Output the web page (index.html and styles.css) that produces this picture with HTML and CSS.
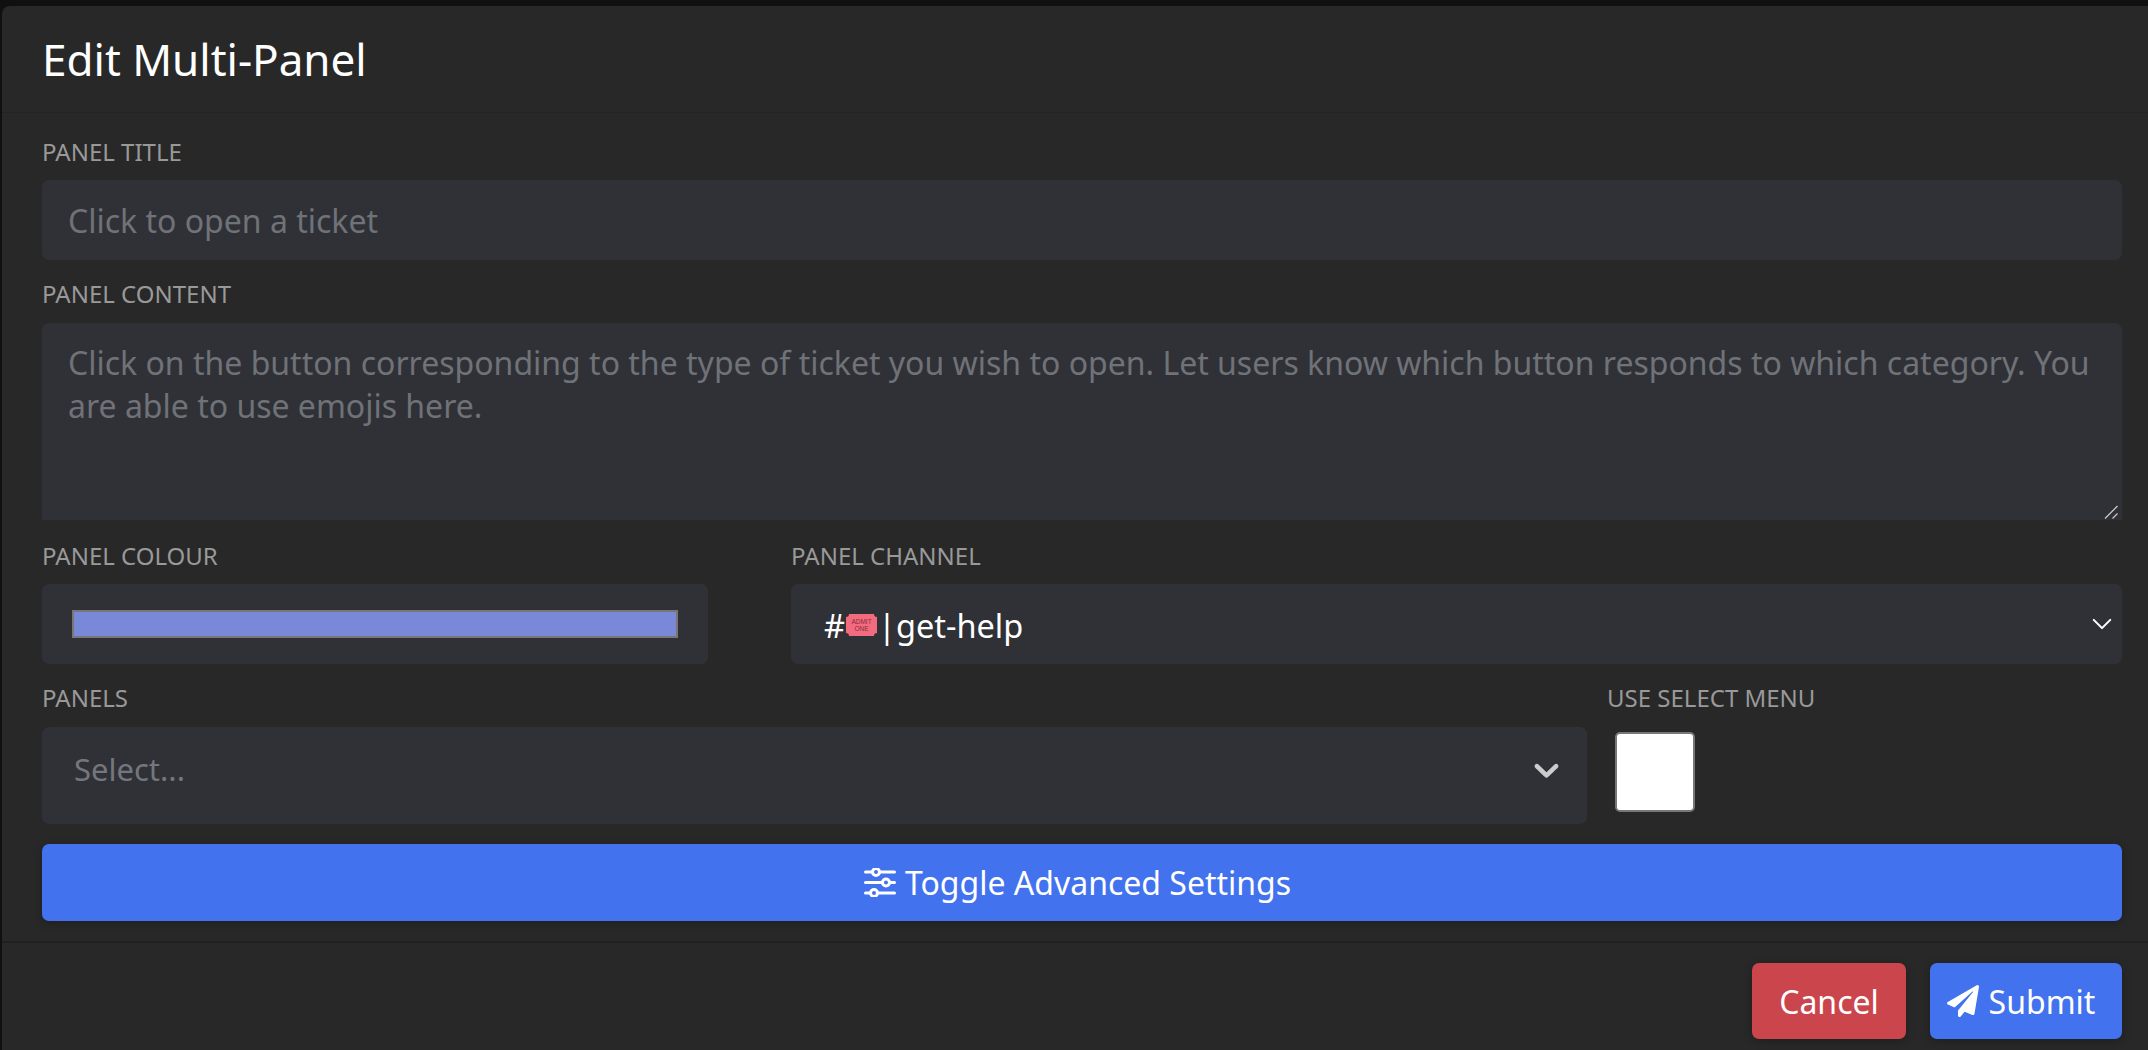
FILE: index.html
```html
<!DOCTYPE html>
<html>
<head>
    <title>Edit Multi-Panel</title>
    <link rel="stylesheet" href="styles.css">
</head>
<body>
    <div class="modal">
        <div class="modal-header">
            <h1>Edit Multi-Panel</h1>
        </div>
        <form class="modal-body">
            <label class="field-label" for="title">Panel Title</label>
            <input class="text-input" type="text" id="title" placeholder="Click to open a ticket">

            <label class="field-label" for="content">Panel Content</label>
            <div class="content-wrap">
                <textarea class="text-input content-input" id="content" placeholder="Click on the button corresponding to the type of ticket you wish to open. Let users know which button responds to which category. You are able to use emojis here."></textarea>
                <svg class="resize-grip" viewBox="0 0 14 14"><path d="M1 13.500L13.500 1M8.500 13.500L13.500 8.500" stroke="#c8c8c8" stroke-width="1.300" fill="none"/></svg>
            </div>

            <div class="row row-channel">
                <div class="col">
                    <label class="field-label" for="colour">Panel Colour</label>
                    <div class="colour-box">
                        <div class="colour-swatch" id="colour"></div>
                    </div>
                </div>
                <div class="col">
                    <label class="field-label">Panel Channel</label>
                    <div class="channel-select">
                        <span class="channel-name">#<svg class="ticket" viewBox="0 0 31 22"><path d="M3 0h25a3 3 0 0 0 3 3v16a3 3 0 0 0-3 3H3a3 3 0 0 0-3-3V3a3 3 0 0 0 3-3z" fill="#f26b7f"/><text x="15.500" y="10" class="ticket-text">ADMIT</text><text x="15.500" y="17" class="ticket-text">ONE</text></svg>|get-help</span>
                        <svg class="select-arrow" viewBox="0 0 16 16"><path d="M2 5l6 6 6-6" fill="none" stroke="#fff" stroke-width="1.500" stroke-linecap="round" stroke-linejoin="round"/></svg>
                    </div>
                </div>
            </div>

            <div class="row row-panels">
                <div class="col">
                    <label class="field-label">Panels</label>
                    <div class="multi-select">
                        <span class="multi-placeholder">Select...</span>
                        <svg class="multi-arrow" viewBox="0 0 20 20"><path d="M4.516 7.548c0.436-0.446 1.043-0.481 1.576 0l3.908 3.747 3.908-3.747c0.533-0.481 1.141-0.446 1.576 0 0.436 0.445 0.408 1.197 0 1.615-0.406 0.418-4.695 4.502-4.695 4.502-0.217 0.223-0.502 0.335-0.789 0.335s-0.572-0.112-0.791-0.335c0 0-4.287-4.084-4.695-4.502s-0.436-1.170 0-1.615z" fill="#cccccc"/></svg>
                    </div>
                </div>
                <div class="col">
                    <label class="field-label" for="useSelect">Use Select Menu</label>
                    <input class="checkbox" type="checkbox" id="useSelect">
                </div>
            </div>

            <button type="button" class="btn btn-primary btn-wide">
                <svg class="icon-sliders" viewBox="0 0 32 29" fill="none" stroke="#fff" stroke-width="3" stroke-linecap="round">
                    <path d="M1.500 4H8M16 4H30.500M1.500 14.500H18M26 14.500H30.500M1.500 25H6M14 25H30.500"/>
                    <circle cx="12" cy="4" r="3.500"/>
                    <circle cx="22" cy="14.500" r="3.500"/>
                    <circle cx="10" cy="25" r="3.500"/>
                </svg>
                Toggle Advanced Settings
            </button>
        </form>
        <div class="modal-footer">
            <button type="button" class="btn btn-danger">Cancel</button>
            <button type="button" class="btn btn-primary btn-submit">
                <svg class="icon-plane" viewBox="0 0 512 512"><path d="M476 3.200L12.500 270.600c-18.100 10.400-15.800 35.600 2.200 43.200L121 358.400l287.300-253.200c5.500-4.900 13.300 2.600 8.600 8.300L176 407v80.500c0 23.600 28.500 32.900 42.500 15.800L282 426l124.600 52.200c14.200 6 30.400-2.900 33-18.200l72-432C515 7.800 493.300-6.800 476 3.200z" fill="#fff"/></svg>
                Submit
            </button>
        </div>
    </div>
</body>
</html>
```

FILE: styles.css
```css
body {
    font-family: "Noto Sans", Arial, sans-serif;
    background-color: #101010;
    margin: 0;
    padding: 6px 0 0 2px;
    height: 1044px;
    overflow: hidden;
}

.modal {
    background-color: #282828;
    border-radius: 8px 0 0 0;
    height: 1044px;
    box-sizing: border-box;
}

.modal-header {
    height: 107px;
    box-sizing: border-box;
    padding: 0 40px;
    display: flex;
    align-items: center;
    border-bottom: 1px solid #232323;
}

h1 {
    margin: 0;
    color: #fff;
    font-size: 44px;
    font-weight: 400;
    line-height: 64px;
}

.modal-body {
    padding: 24px 26px 0 40px;
    height: 830px;
    box-sizing: border-box;
    border-bottom: 2px solid #212121;
    display: flex;
    flex-direction: column;
}

.field-label {
    display: block;
    color: #999;
    font-size: 24px;
    line-height: 29px;
    height: 31px;
    margin-bottom: 12px;
    text-transform: uppercase;
}

.text-input {
    display: block;
    width: 100%;
    height: 80px;
    box-sizing: border-box;
    padding: 0 26px;
    margin-bottom: 19px;
    background-color: #2f3137;
    border: none;
    border-radius: 7px;
    color: #fff;
    font-family: inherit;
    font-size: 32px;
    line-height: 43px;
    outline: none;
}

.text-input::placeholder {
    color: #6f7277;
    opacity: 1;
}

.content-wrap {
    position: relative;
    margin: 1px 0 21px;
}

.content-input {
    height: 197px;
    padding: 18px 26px;
    margin-bottom: 0;
    border-radius: 7px 7px 0 0;
    resize: none;
}

.resize-grip {
    position: absolute;
    right: 4px;
    bottom: 1px;
    width: 14px;
    height: 14px;
}

.row {
    display: flex;
}

.row-channel {
    gap: 83px;
    height: 142px;
}

.row-channel .col:first-child {
    width: 666px;
    flex-shrink: 0;
}

.row-channel .col:last-child {
    flex: 1;
}

.row-panels {
    gap: 20px;
    height: 161px;
}

.row-panels .field-label {
    margin-bottom: 13px;
}

.row-panels .col:first-child {
    width: 1545px;
    flex-shrink: 0;
}

.row-panels .col:last-child {
    flex: 1;
}

.colour-box {
    height: 80px;
    box-sizing: border-box;
    padding: 26px 30px;
    background-color: #2f3137;
    border-radius: 7px;
}

.colour-swatch {
    height: 28px;
    box-sizing: border-box;
    background-color: #7a88d8;
    border: 2px solid #777;
}

.channel-select {
    height: 80px;
    box-sizing: border-box;
    padding: 0 9px 0 33px;
    display: flex;
    align-items: center;
    justify-content: space-between;
    background-color: #2f3137;
    border-radius: 7px;
}

.channel-name {
    color: #fff;
    font-size: 32.500px;
    display: flex;
    align-items: center;
    padding-top: 2px;
}

.ticket {
    width: 31px;
    height: 22px;
    margin: 0 1px 0 1px;
}

.ticket-text {
    fill: #8a2c3c;
    font-size: 6.500px;
    text-anchor: middle;
    font-family: "Liberation Sans", sans-serif;
}

.select-arrow {
    width: 22px;
    height: 22px;
    margin-left: 2px;
}

.multi-select {
    height: 97px;
    box-sizing: border-box;
    padding: 0 20px 12px 32px;
    display: flex;
    align-items: center;
    justify-content: space-between;
    background-color: #2f3137;
    border-radius: 7px;
    color: #73777d;
    font-size: 31px;
}

.multi-placeholder {
    margin-bottom: 2px;
}

.multi-arrow {
    width: 41px;
    height: 41px;
}

.checkbox {
    appearance: none;
    display: block;
    margin: 18px 0 0 8px;
    width: 80px;
    height: 80px;
    box-sizing: border-box;
    background-color: #fff;
    border: 2px solid #777;
    border-radius: 5px;
}

.btn {
    display: inline-flex;
    align-items: center;
    justify-content: center;
    height: 76px;
    box-sizing: border-box;
    border: none;
    border-radius: 7px;
    color: #fff;
    font-family: inherit;
    font-size: 32px;
    box-shadow: 0 2px 8px rgba(0, 0, 0, 0.25);
}

.btn-primary {
    background-color: #4372ee;
}

.btn-danger {
    background-color: #cb454c;
    width: 154px;
}

.btn-wide {
    width: 100%;
    height: 77px;
    gap: 9px;
    padding-right: 15px;
}

.btn-submit {
    width: 192px;
    gap: 10px;
    padding: 0 10px 0 0;
}

.icon-sliders {
    width: 32px;
    height: 29px;
}

.icon-plane {
    width: 32px;
    height: 32px;
}

.modal-footer {
    display: flex;
    justify-content: flex-end;
    gap: 24px;
    padding: 20px 26px 0 0;
}
```
